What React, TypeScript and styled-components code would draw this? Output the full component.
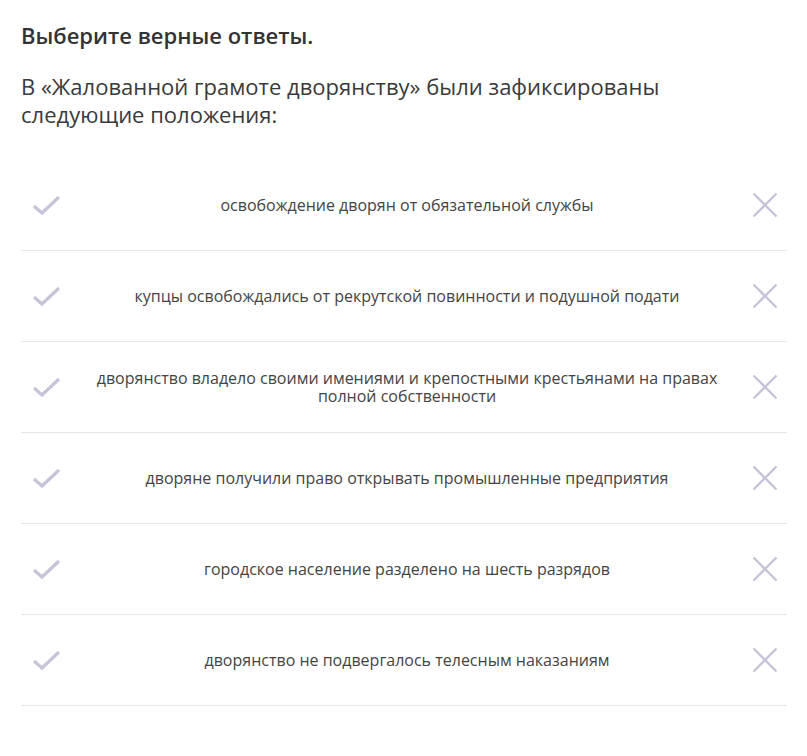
import React from "react";
import styled, { createGlobalStyle } from "styled-components";

const Global = createGlobalStyle`
  html, body { margin: 0; padding: 0; background: #ffffff; }
  body { font-family: "Open Sans", "Noto Sans", sans-serif; }
`;

const Page = styled.div`
  padding: 20px 20px 0 21px;
  display: flex;
  flex-direction: column;
`;

const Title = styled.h1`
  margin: 0;
  font-size: 22px;
  font-weight: 600;
  line-height: 30px;
  color: #333333;
`;

const Question = styled.p`
  margin: 22px 0 0;
  font-size: 22px;
  font-weight: 400;
  line-height: 28px;
  color: #3a3a3a;
`;

const List = styled.ul`
  list-style: none;
  margin: 32px 0 0;
  padding: 0;
`;

const Row = styled.li`
  height: 90px;
  display: flex;
  align-items: center;
  border-bottom: 1px solid #e6e6e6;
  gap: 12px;
`;

const IconBtn = styled.button`
  flex: 0 0 auto;
  height: 40px;
  display: flex;
  align-items: center;
  background: none;
  border: 0;
  padding: 0;
  color: #c6c4d8;
  cursor: pointer;
`;

const CheckBtn = styled(IconBtn)`
  width: 54px;
  justify-content: flex-start;
  padding-left: 11px;
`;

const CrossBtn = styled(IconBtn)`
  width: 48px;
  justify-content: flex-end;
  padding-right: 9px;
`;

const Text = styled.span`
  flex: 1;
  text-align: center;
  font-size: 16px;
  line-height: 18px;
  color: #444444;
`;

const Check = () => (
  <svg width="30" height="22" viewBox="0 0 30 22">
    <path d="M2 12 L10 19 L27 3" fill="none" stroke="currentColor" strokeWidth="3.2" />
  </svg>
);

const Cross = () => (
  <svg width="26" height="26" viewBox="0 0 26 26">
    <path d="M1.5 1.5 L24.5 24.5 M24.5 1.5 L1.5 24.5" fill="none" stroke="currentColor" strokeWidth="2.4" />
  </svg>
);

const items = [
  "освобождение дворян от обязательной службы",
  "купцы освобождались от рекрутской повинности и подушной подати",
  "дворянство владело своими имениями и крепостными крестьянами на правах полной собственности",
  "дворяне получили право открывать промышленные предприятия",
  "городское население разделено на шесть разрядов",
  "дворянство не подвергалось телесным наказаниям",
];

export default function App() {
  return (
    <>
      <Global />
      <Page>
        <Title>Выберите верные ответы.</Title>
        <Question>
          В «Жалованной грамоте дворянству» были зафиксированы
          <br />
          следующие положения:
        </Question>
        <List>
          {items.map((t) => (
            <Row key={t}>
              <CheckBtn aria-label="верно">
                <Check />
              </CheckBtn>
              <Text>{t}</Text>
              <CrossBtn aria-label="неверно">
                <Cross />
              </CrossBtn>
            </Row>
          ))}
        </List>
      </Page>
    </>
  );
}
